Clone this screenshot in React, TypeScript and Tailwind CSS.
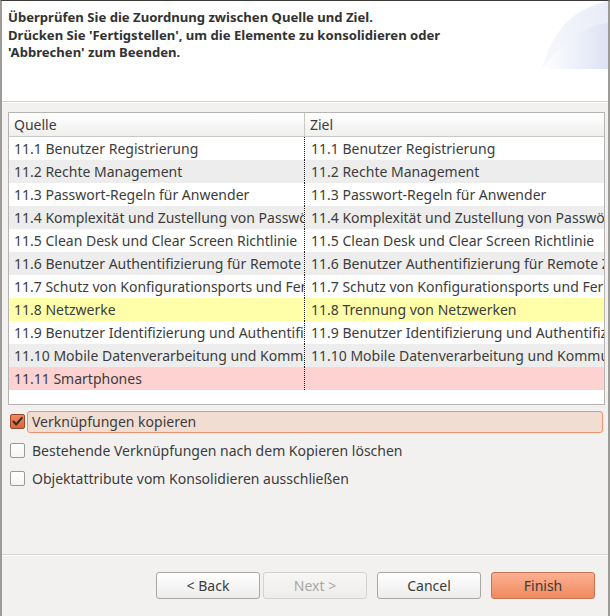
import React from "react";

const rows: { l: string; r: string; bg: string }[] = [
  { l: "11.1 Benutzer Registrierung", r: "11.1 Benutzer Registrierung", bg: "bg-white" },
  { l: "11.2 Rechte Management", r: "11.2 Rechte Management", bg: "bg-[#ededed]" },
  { l: "11.3 Passwort-Regeln für Anwender", r: "11.3 Passwort-Regeln für Anwender", bg: "bg-white" },
  { l: "11.4 Komplexität und Zustellung von Passwörtern", r: "11.4 Komplexität und Zustellung von Passwörtern", bg: "bg-[#ededed]" },
  { l: "11.5 Clean Desk und Clear Screen Richtlinie", r: "11.5 Clean Desk und Clear Screen Richtlinie", bg: "bg-white" },
  { l: "11.6 Benutzer Authentifizierung für Remote Zugriffe", r: "11.6 Benutzer Authentifizierung für Remote Zugriffe", bg: "bg-[#ededed]" },
  { l: "11.7 Schutz von Konfigurationsports und Fernwartung", r: "11.7 Schutz von Konfigurationsports und Fernwartung", bg: "bg-white" },
  { l: "11.8 Netzwerke", r: "11.8 Trennung von Netzwerken", bg: "bg-[#ffffaa]" },
  { l: "11.9 Benutzer Identifizierung und Authentifizierung", r: "11.9 Benutzer Identifizierung und Authentifizierung", bg: "bg-white" },
  { l: "11.10 Mobile Datenverarbeitung und Kommunikation", r: "11.10 Mobile Datenverarbeitung und Kommunikation", bg: "bg-[#ededed]" },
  { l: "11.11 Smartphones", r: "", bg: "bg-[#ffd2d2]" },
];

function Check({ checked }: { checked?: boolean }) {
  if (checked) {
    return (
      <div className="w-[15px] h-[15px] rounded-[2px] border border-[#9a4a2c] bg-gradient-to-b from-[#f08a5e] to-[#d9653c] flex items-center justify-center shrink-0">
        <svg width="13" height="13" viewBox="0 0 13 13">
          <path d="M2.5 6.5 L5.2 9.5 L10.8 2.8" stroke="#3a2a22" strokeWidth="2" fill="none" strokeLinecap="round" strokeLinejoin="round" />
        </svg>
      </div>
    );
  }
  return (
    <div className="w-[15px] h-[15px] rounded-[2px] border border-[#9a9996] bg-gradient-to-b from-white to-[#f4f4f4] shrink-0" />
  );
}

function Btn({ label, kind }: { label: string; kind?: "disabled" | "primary" }) {
  const cls =
    kind === "primary"
      ? "border-[#c77352] bg-gradient-to-b from-[#fbb092] to-[#f0895f] text-[#3c3c3c]"
      : kind === "disabled"
      ? "border-[#d3d2cf] bg-gradient-to-b from-[#f6f6f5] to-[#eeedec] text-[#a8a7a4]"
      : "border-[#a8a7a3] bg-gradient-to-b from-white to-[#ececeb] text-[#3c3c3c]";
  return (
    <div className={`w-[104px] h-[27px] rounded-[3px] border flex items-center justify-center text-[14px] ${cls}`}>
      {label}
    </div>
  );
}

export default function App() {
  return (
    <div
      className="w-[610px] h-[616px] bg-[#f2f1f0] border-l-2 border-r-2 border-[#9c9b97] border-t border-t-[#3c3b37] flex flex-col overflow-hidden text-[#3c3c3c]"
      style={{ fontFamily: '"Noto Sans", "DejaVu Sans", sans-serif' }}
    >
      {/* header */}
      <div className="relative bg-white h-[101px] shrink-0 border-b border-[#cfceca]">
        <svg className="absolute right-0 top-0" width="66" height="68" viewBox="0 0 66 68">
          <defs>
            <linearGradient id="g1" x1="0" y1="0" x2="1" y2="0">
              <stop offset="0" stopColor="#ffffff" />
              <stop offset="1" stopColor="#dde3f5" />
            </linearGradient>
            <linearGradient id="g2" x1="0" y1="0" x2="1" y2="0">
              <stop offset="0" stopColor="#f7f8fd" />
              <stop offset="1" stopColor="#e8ecf8" />
            </linearGradient>
          </defs>
          <path d="M0 68 C 10 30, 30 8, 66 0 L66 68 Z" fill="url(#g2)" />
          <path d="M0 68 C 20 40, 40 26, 66 22 L66 68 Z" fill="url(#g1)" />
        </svg>
        <div className="relative pl-[6px] pt-[8px] text-[13.1px] leading-[17.5px] font-bold text-[#323232]">
          <div>Überprüfen Sie die Zuordnung zwischen Quelle und Ziel.</div>
          <div>Drücken Sie 'Fertigstellen', um die Elemente zu konsolidieren oder</div>
          <div>'Abbrechen' zum Beenden.</div>
        </div>
      </div>
      <div className="h-px bg-white shrink-0" />

      {/* table */}
      <div className="ml-[6px] mt-[9px] w-[597px] h-[293px] border border-[#b5b4b0] bg-white flex flex-col shrink-0">
        <div className="flex h-[24px] border-b border-[#c9c8c4] bg-gradient-to-b from-white to-[#efefee] shrink-0">
          <div className="w-[296px] border-r border-[#c9c8c4] pl-[5px] flex items-center text-[14px]">Quelle</div>
          <div className="flex-1 pl-[5px] flex items-center text-[14px]">Ziel</div>
        </div>
        {rows.map((r, i) => (
          <div key={i} className={`flex h-[23px] ${r.bg} shrink-0 text-[14px] whitespace-nowrap`}>
            <div className="w-[296px] overflow-hidden pl-[5px] flex items-center border-r border-dotted border-[#222]">{r.l}</div>
            <div className="flex-1 overflow-hidden pl-[6px] flex items-center">{r.r}</div>
          </div>
        ))}
      </div>

      {/* options */}
      <div className="flex flex-col mt-[5px] text-[14px]">
        <div className="flex items-center h-[23px]">
          <div className="ml-[8px] mr-[2px]"><Check checked /></div>
          <div className="flex-1 mr-[5px] h-[22px] rounded-[3px] border border-[#f0916b] bg-[#f2ddd3] pl-[4px] flex items-center">
            Verknüpfungen kopieren
          </div>
        </div>
        <div className="flex items-center h-[23px] mt-[6px]">
          <div className="ml-[8px] mr-[7px]"><Check /></div>
          <div>Bestehende Verknüpfungen nach dem Kopieren löschen</div>
        </div>
        <div className="flex items-center h-[23px] mt-[5px]">
          <div className="ml-[8px] mr-[7px]"><Check /></div>
          <div>Objektattribute vom Konsolidieren ausschließen</div>
        </div>
      </div>

      <div className="flex-1" />
      <div className="h-px bg-[#d5d4d0] shrink-0" />
      <div className="h-px bg-white shrink-0" />
      <div className="h-[60px] shrink-0 flex items-start justify-end pt-[16px] pr-[13px]">
        <Btn label="< Back" />
        <div className="w-[3px]" />
        <Btn label="Next >" kind="disabled" />
        <div className="w-[10px]" />
        <Btn label="Cancel" />
        <div className="w-[10px]" />
        <Btn label="Finish" kind="primary" />
      </div>
    </div>
  );
}
